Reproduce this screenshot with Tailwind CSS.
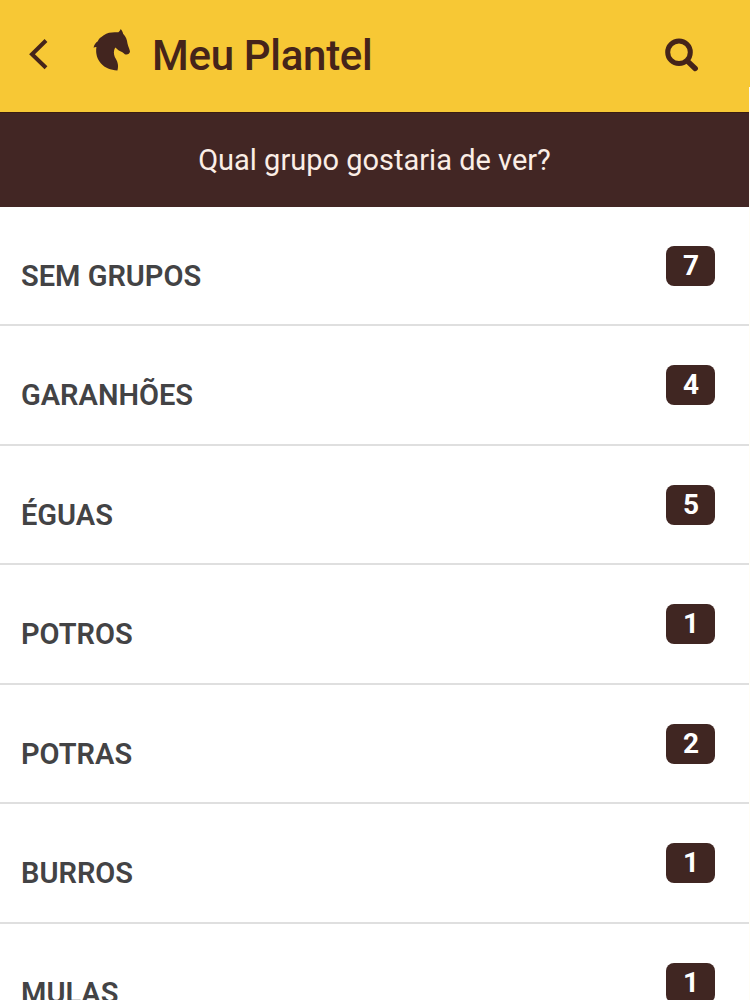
<!DOCTYPE html>
<html lang="pt-BR">
<head>
    <meta charset="UTF-8">
    <meta name="viewport" content="width=device-width, initial-scale=1.0">
    <title>Meu Plantel</title>
    <script src="https://cdn.jsdelivr.net/npm/@tailwindcss/browser@4"></script>
    <style>
        body {
            font-family: 'Roboto', sans-serif;
        }
    </style>
</head>
<body class="relative h-[1000px] overflow-hidden bg-white">
    <header class="flex h-28 items-center bg-[#f7c835] pb-1 text-[#45241a]">
        <a href="#" aria-label="Voltar" class="ml-7">
            <svg class="h-9 w-6" viewBox="0 0 24 36" fill="none" stroke="currentColor" stroke-width="4">
                <path d="M18 4.5 4 18.2 18 31.8"/>
            </svg>
        </a>
        <!-- Cabeça de cavalo -->
        <svg class="mb-2 ml-[38px] h-[50px] w-[50px]" viewBox="90 24 50 50" fill="#42251f">
            <path d="M120.7 28C122.2 29.6 122.8 31.2 123.1 32.8C126 35.5 127 39 127.5 42.5C128.3 46 129.8 48.6 130 50.6C129.6 53 127.3 54.2 124.8 53.3C123.6 51.6 121.5 50.5 119.3 49.7C117.5 48.8 116.6 47 115.2 46.4C113.4 49.5 113.6 53 114.9 56.2C117.5 60 119 64.5 117.4 69.4C110.5 69.2 105 67 101 62.5C97.3 58 95.4 53 96.4 46C95.4 45.8 94.5 46.2 93.6 46.8C93.8 44.3 95.4 41.8 97.8 40.3C98.4 38.4 99.8 36.8 101.4 36C104.3 33.2 108 31.6 112 31.5C114.5 31.2 116.7 31.1 118.4 31.2C119.5 30.5 120.2 29.4 120.7 28Z"/>
        </svg>
        <h1 class="mt-[3px] ml-[12px] text-[42px] leading-[50px] font-medium tracking-[-0.3px]">Meu Plantel</h1>
        <button type="button" aria-label="Buscar" class="mr-[49px] ml-auto">
            <svg class="h-9 w-9" viewBox="0 0 36 36" fill="none" stroke="currentColor" stroke-linecap="round">
                <circle cx="14" cy="16.2" r="11.3" stroke-width="5"/>
                <path d="m23 25.6 7.2 6.9" stroke-width="5.4"/>
            </svg>
        </button>
    </header>

    <main class="mr-px">
        <p class="h-[94.5px] border-t border-[#3a1d12] bg-[#422624] pt-[29px] text-center text-[29px] leading-9 text-[#fbeee6]">Qual grupo gostaria de ver?</p>

        <ul id="groups" class="text-[29px] font-bold text-[#434345]">
            <li class="flex h-[119.6px] items-start justify-between border-b-2 border-[#dfdfdf] pr-[34px] pl-[21px]">
                <span class="mt-[51px] leading-9 font-semibold">SEM GRUPOS</span>
                <span class="mt-[39px] h-10 w-[49px] rounded-lg bg-[#402622] pl-px text-center text-[28px] leading-[39px] text-white">7</span>
            </li>
            <li class="flex h-[119.6px] items-start justify-between border-b-2 border-[#dfdfdf] pr-[34px] pl-[21px]">
                <span class="mt-[51px] leading-9 font-semibold">GARANHÕES</span>
                <span class="mt-[39px] h-10 w-[49px] rounded-lg bg-[#402622] pl-px text-center text-[28px] leading-[39px] text-white">4</span>
            </li>
            <li class="flex h-[119.6px] items-start justify-between border-b-2 border-[#dfdfdf] pr-[34px] pl-[21px]">
                <span class="mt-[51px] leading-9 font-semibold">ÉGUAS</span>
                <span class="mt-[39px] h-10 w-[49px] rounded-lg bg-[#402622] pl-px text-center text-[28px] leading-[39px] text-white">5</span>
            </li>
            <li class="flex h-[119.6px] items-start justify-between border-b-2 border-[#dfdfdf] pr-[34px] pl-[21px]">
                <span class="mt-[51px] leading-9 font-semibold">POTROS</span>
                <span class="mt-[39px] h-10 w-[49px] rounded-lg bg-[#402622] pl-px text-center text-[28px] leading-[39px] text-white">1</span>
            </li>
            <li class="flex h-[119.6px] items-start justify-between border-b-2 border-[#dfdfdf] pr-[34px] pl-[21px]">
                <span class="mt-[51px] leading-9 font-semibold">POTRAS</span>
                <span class="mt-[39px] h-10 w-[49px] rounded-lg bg-[#402622] pl-px text-center text-[28px] leading-[39px] text-white">2</span>
            </li>
            <li class="flex h-[119.6px] items-start justify-between border-b-2 border-[#dfdfdf] pr-[34px] pl-[21px]">
                <span class="mt-[51px] leading-9 font-semibold">BURROS</span>
                <span class="mt-[39px] h-10 w-[49px] rounded-lg bg-[#402622] pl-px text-center text-[28px] leading-[39px] text-white">1</span>
            </li>
            <li class="flex h-[119.6px] items-start justify-between border-b-2 border-[#dfdfdf] pr-[34px] pl-[21px]">
                <span class="mt-[51px] leading-9 font-semibold">MULAS</span>
                <span class="mt-[39px] h-10 w-[49px] rounded-lg bg-[#402622] pl-px text-center text-[28px] leading-[39px] text-white">1</span>
            </li>
        </ul>
    </main>

    <div class="absolute top-[87px] right-0 h-[913px] w-px bg-[#fffdf5]"></div>
</body>
</html>
